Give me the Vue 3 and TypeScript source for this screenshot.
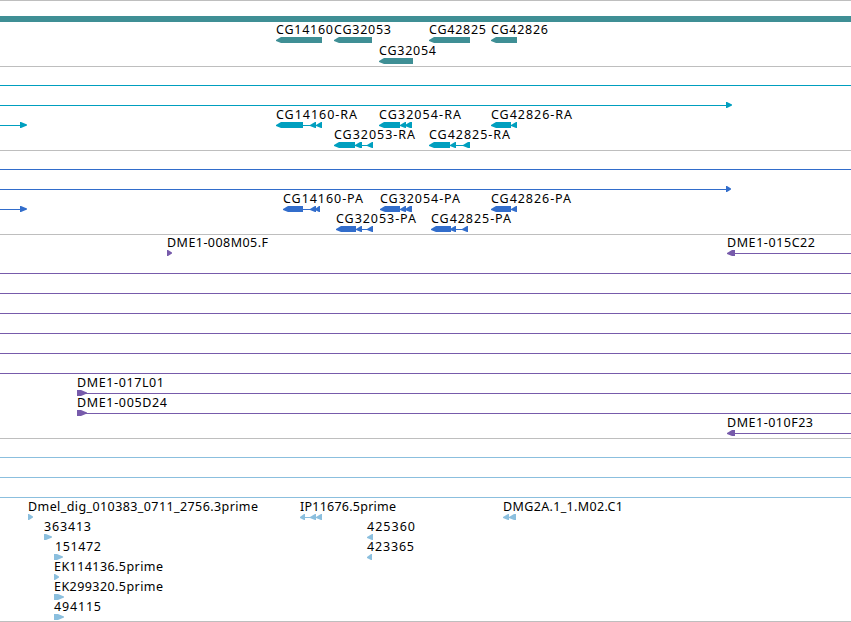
<script setup lang="ts">
type Dir = "left" | "right";
interface Feature {
  row: number;
  dir: Dir;
  // start/end pairs of the exons
  blocks: number[][];
  // thin connecting line
  line?: number[];
  label?: string;
  labelWidth?: number;
  labelX?: number;
}
interface Track {
  name: string;
  height: number;
  first: number;
  pitch: number;
  features: Feature[];
}

const WIDTH = 851;

const left = (row: number, label: string, labelWidth: number, blocks: number[][], line?: number[]): Feature => ({ row, dir: "left", label, labelWidth, blocks, line });
const right = (row: number, label: string, labelWidth: number, blocks: number[][], line?: number[]): Feature => ({ row, dir: "right", label, labelWidth, blocks, line });
const span = (row: number, end = WIDTH): Feature => ({ row, dir: "right", blocks: [], line: [0, end] });

const tracks: Track[] = [
  {
    name: "gene",
    height: 66,
    first: 40,
    pitch: 21,
    features: [
      left(0, "CG14160", 57, [[276, 322]]),
      left(0, "CG32053", 57, [[334, 372]]),
      left(1, "CG32054", 57, [[379, 413]]),
      left(0, "CG42825", 57, [[429, 470]]),
      left(0, "CG42826", 57, [[491, 517]]),
    ],
  },
  {
    name: "mrna",
    height: 84,
    first: 19,
    pitch: 20,
    features: [
      span(0),
      { row: 1, dir: "right", blocks: [[726, 732]], line: [0, 726] },
      { row: 2, dir: "right", blocks: [[20, 27]], line: [0, 20] },
      left(2, "CG14160-RA", 81, [[276, 303], [310, 316], [316, 322]], [303, 312]),
      left(3, "CG32053-RA", 81, [[334, 355], [355, 362], [367, 373]], [355, 368]),
      left(2, "CG32054-RA", 82, [[379, 400], [400, 406], [405, 412]], [400, 412]),
      left(3, "CG42825-RA", 81, [[429, 450], [450, 456], [463, 470]], [450, 464]),
      left(2, "CG42826-RA", 81, [[491, 511], [511, 517]], [511, 516]),
    ],
  },
  {
    name: "cds",
    height: 84,
    first: 19,
    pitch: 20,
    features: [
      span(0),
      { row: 1, dir: "right", blocks: [[726, 731]], line: [0, 726] },
      { row: 2, dir: "right", blocks: [[20, 27]], line: [0, 20] },
      left(2, "CG14160-PA", 80, [[283, 303], [310, 316], [315, 320]], [303, 312]),
      left(3, "CG32053-PA", 80, [[336, 356], [356, 362], [367, 373]], [355, 368]),
      left(2, "CG32054-PA", 80, [[380, 400], [400, 406], [405, 412]], [400, 412]),
      left(3, "CG42825-PA", 80, [[431, 451], [450, 456], [462, 468]], [450, 464]),
      left(2, "CG42826-PA", 80, [[491, 511], [511, 517]], [511, 516]),
    ],
  },
  {
    name: "bac",
    height: 204,
    first: 19,
    pitch: 20,
    features: [
      right(0, "DME1-008M05.F", 101, [[167, 172]]),
      left(0, "DME1-015C22", 88, [[727, 735]], [735, WIDTH]),
      span(1),
      span(2),
      span(3),
      span(4),
      span(5),
      span(6),
      right(7, "DME1-017L01", 87, [[77, 87]], [81, WIDTH]),
      right(8, "DME1-005D24", 90, [[77, 87]], [81, WIDTH]),
      left(9, "DME1-010F23", 86, [[727, 735]], [735, WIDTH]),
    ],
  },
  {
    name: "est",
    height: 183,
    first: 19,
    pitch: 20,
    features: [
      span(0),
      span(1),
      span(2),
      right(3, "Dmel_dig_010383_0711_2756.3prime", 230, [[28, 33]]),
      right(4, "363413", 47, [[44, 52]]),
      { ...right(5, "151472", 46, [[54, 63]]), labelX: 55 },
      right(6, "EK114136.5prime", 109, [[54, 59]]),
      right(7, "EK299320.5prime", 109, [[54, 64]]),
      right(8, "494115", 47, [[54, 64]]),
      left(3, "IP11676.5prime", 96, [[300, 305], [310, 316], [316, 322]], [304, 312]),
      left(4, "425360", 48, [[367, 373]]),
      left(5, "423365", 47, [[367, 372]]),
      left(3, "DMG2A.1_1.M02.C1", 120, [[503, 509], [509, 516]], [508, 516]),
    ],
  },
];

// the lines sit on the pixel row below the glyph's middle
const rowY = (track: Track, f: Feature) => track.first + f.row * track.pitch;

const arrow = (block: number[], dir: Dir, y: number) => {
  const [a, b] = block;
  const w = b - a;
  if (dir === "left") {
    const head = Math.min(5, w - 1);
    return `${a},${y} ${a + head},${y - 3} ${b},${y - 3} ${b},${y + 3} ${a + head},${y + 3} ${a},${y + 1}`;
  }
  const head = Math.min(6, w - 1);
  return `${a},${y - 3} ${b - head},${y - 3} ${b},${y - 0.5} ${b},${y + 0.5} ${b - head},${y + 3} ${a},${y + 3}`;
};
</script>

<template>
  <main class="browser">
    <section v-for="track in tracks" :key="track.name" class="track" :class="track.name">
      <svg :width="WIDTH" :height="track.height - 1" :viewBox="`0 1 ${WIDTH} ${track.height - 1}`">
        <rect v-if="track.name === 'gene'" x="0" y="16" :width="WIDTH" height="6" />
        <g v-for="(f, i) in track.features" :key="i">
          <rect v-if="f.line" :x="f.line[0]" :y="rowY(track, f)" :width="f.line[1] - f.line[0]" height="1" />
          <polygon v-for="(block, j) in f.blocks" :key="j" :points="arrow(block, f.dir, rowY(track, f))" />
          <text v-if="f.label" :x="f.labelX ?? f.blocks[0][0]" :y="rowY(track, f) - 6" :textLength="f.labelWidth">{{ f.label }}</text>
        </g>
      </svg>
    </section>
  </main>
</template>

<style>
body {
  margin: 0;
  background: #fff;
}
</style>

<style scoped>
.browser {
  width: 851px;
  border-bottom: 1px solid #bebebe;
}
.track {
  border-top: 1px solid #bebebe;
}
svg {
  display: block;
}
text {
  font-family: "Noto Sans", "DejaVu Sans", sans-serif;
  font-size: 12.5px;
  fill: #000;
}
.gene {
  fill: #3f8f95;
}
.mrna {
  fill: #009fbf;
}
.cds {
  fill: #326dcb;
}
.bac {
  fill: #775bab;
}
.est {
  fill: #8bbfde;
}
</style>
